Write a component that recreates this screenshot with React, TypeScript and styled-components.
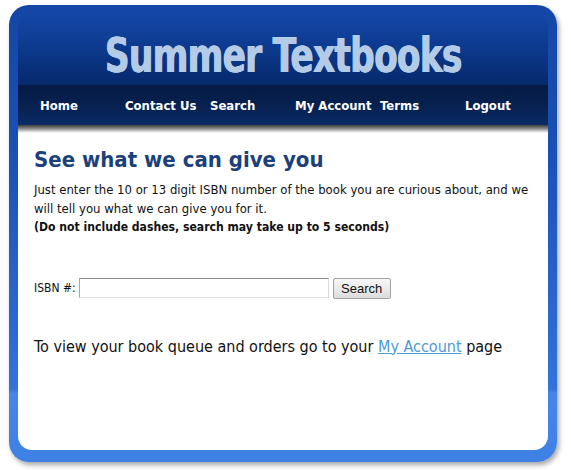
import React from "react";
import styled, { createGlobalStyle } from "styled-components";

const Global = createGlobalStyle`
  html, body { margin: 0; padding: 0; background: #ffffff; }
  body { font-family: "DejaVu Sans Condensed", "DejaVu Sans", sans-serif; }
`;

const Page = styled.div`
  padding: 5px 14px 8px 9px;
  width: 571px;
  box-sizing: border-box;
`;

const Frame = styled.div`
  width: 548px;
  height: 457px;
  box-sizing: border-box;
  border-radius: 20px;
  padding: 10px 9px 12px 9px;
  background: linear-gradient(180deg, #1446a6 0%, #1a52b8 35%, #2b69d2 70%, #3273dc 84%, #4786e8 85%, #3e80e3 100%);
  box-shadow: 2px 3px 5px rgba(0, 0, 0, 0.35);
  display: flex;
  flex-direction: column;
`;

const Header = styled.header`
  height: 70px;
  border-radius: 10px 10px 0 0;
  background: linear-gradient(180deg, #1347a6 0%, #0c3a8e 45%, #06296c 100%);
  display: flex;
  align-items: flex-end;
  justify-content: center;
`;

const Title = styled.h1`
  margin: 0 0 4px 0;
  font-family: "DejaVu Sans Condensed", sans-serif;
  font-weight: 900;
  font-size: 44px;
  line-height: 48px;
  color: #b3cbe6;
  letter-spacing: -0.6px;
  white-space: nowrap;
  text-shadow: 0.6px 0 0 #b3cbe6, -0.6px 0 0 #b3cbe6;
  transform: scale(0.86, 1.08);
  transform-origin: 50% 80%;
`;

const Nav = styled.nav`
  height: 40px;
  background: linear-gradient(180deg, #051a45 0%, #07214f 50%, #0a2b66 100%);
  display: flex;
  align-items: center;
  padding-left: 22px;
`;

const NavLink = styled.a`
  width: 85px;
  flex: none;
  color: #ffffff;
  font-family: "DejaVu Sans Condensed", sans-serif;
  font-weight: bold;
  font-size: 13px;
  text-decoration: none;
`;

const Shadow = styled.div`
  height: 8px;
  background: linear-gradient(180deg, #3c3c3c 0%, #8a8a8a 45%, #e2e2e2 85%, #ffffff 100%);
`;

const Content = styled.main`
  flex: 1;
  background: #ffffff;
  border-radius: 0 0 14px 14px;
  padding: 14px 16px 0 16px;
  color: #111111;
`;

const Heading = styled.h2`
  margin: 0;
  font-family: "DejaVu Sans Condensed", sans-serif;
  font-weight: bold;
  font-size: 22px;
  line-height: 26px;
  color: #1b407c;
`;

const Intro = styled.p`
  margin: 8px 0 0 0;
  font-size: 13px;
  line-height: 18.5px;
`;

const Strong = styled.strong`
  font-weight: bold;
  font-size: 12.1px;
`;

const SearchRow = styled.form`
  margin-top: 41px;
  display: flex;
  align-items: center;
  height: 21px;
`;

const Label = styled.label`
  font-size: 12px;
  margin-right: 3px;
`;

const Input = styled.input`
  width: 250px;
  height: 20px;
  box-sizing: border-box;
  border-style: solid;
  border-width: 1px;
  border-color: #8c8c8c #dadada #e2e2e2 #a8a8a8;
  background: #ffffff;
  padding: 0 2px;
  margin: 0 4px 0 0;
`;

const Button = styled.button`
  width: 58px;
  height: 21px;
  box-sizing: border-box;
  border: 1px solid #a3a3a3;
  border-radius: 2px;
  background: linear-gradient(180deg, #f6f6f6 0%, #ebebeb 50%, #dcdcdc 100%);
  font-family: "Liberation Sans", Arial, sans-serif;
  font-size: 13px;
  color: #111;
  padding: 0;
`;

const Footer = styled.p`
  margin: 38px 0 0 0;
  font-size: 16px;
  line-height: 20px;
`;

const Link = styled.a`
  color: #4b9bd9;
  text-decoration: underline;
`;

const navItems = ["Home", "Contact Us", "Search", "My Account", "Terms", "Logout"];

export default function App() {
  return (
    <>
      <Global />
      <Page>
        <Frame>
          <Header>
            <Title>Summer Textbooks</Title>
          </Header>
          <Nav>
            {navItems.map((n) => (
              <NavLink key={n} href="#">{n}</NavLink>
            ))}
          </Nav>
          <Shadow />
          <Content>
            <Heading>See what we can give you</Heading>
            <Intro>
              Just enter the 10 or 13 digit ISBN number of the book you are curious about, and we will tell you what we can give you for it.
              <br />
              <Strong>(Do not include dashes, search may take up to 5 seconds)</Strong>
            </Intro>
            <SearchRow onSubmit={(e) => e.preventDefault()}>
              <Label>ISBN #:</Label>
              <Input type="text" />
              <Button type="submit">Search</Button>
            </SearchRow>
            <Footer>
              To view your book queue and orders go to your <Link href="#">My Account</Link> page
            </Footer>
          </Content>
        </Frame>
      </Page>
    </>
  );
}
